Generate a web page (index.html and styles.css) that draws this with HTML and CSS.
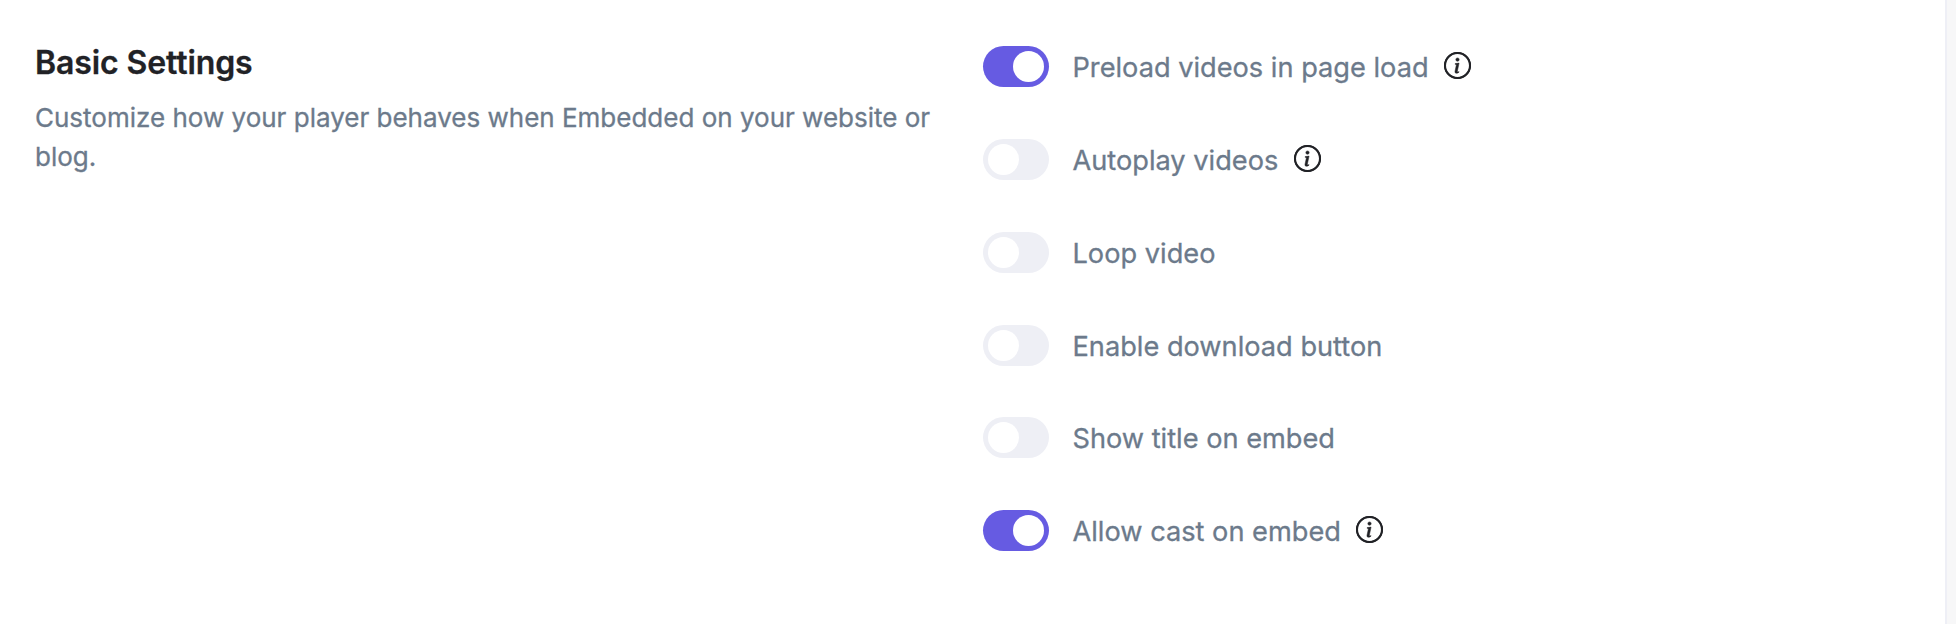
FILE: index.html
```html
<!DOCTYPE html>
<html lang="en">
<head>
<meta charset="utf-8">
<title>Basic Settings</title>
<link rel="stylesheet" href="styles.css">
</head>
<body>
<svg class="sprite" aria-hidden="true">
  <symbol id="info" viewBox="0 0 16 16">
    <path d="M8 15A7 7 0 1 1 8 1a7 7 0 0 1 0 14m0 1A8 8 0 1 0 8 0a8 8 0 0 0 0 16"/>
    <circle cx="8" cy="8" r="7.4" fill="none" stroke="#212226" stroke-width="1.2"/>
    <path stroke="#212226" stroke-width=".3" d="m8.93 6.588-2.29.287-.082.38.45.083c.294.07.352.176.288.469l-.738 3.468c-.194.897.105 1.319.808 1.319.545 0 1.178-.252 1.465-.598l.088-.416c-.2.176-.492.246-.686.246-.275 0-.375-.193-.304-.533zM9 4.5a1 1 0 1 1-2 0 1 1 0 0 1 2 0"/>
  </symbol>
</svg>
<main class="panel">
  <section class="intro">
    <h2 class="title">Basic Settings</h2>
    <p class="description">Customize how your player behaves when Embedded on your website or blog.</p>
  </section>
  <section class="options">
    <div class="option"><span class="toggle on"></span><span class="label">Preload videos in page load</span><svg class="info"><use href="#info"/></svg></div>
    <div class="option"><span class="toggle"></span><span class="label">Autoplay videos</span><svg class="info"><use href="#info"/></svg></div>
    <div class="option"><span class="toggle"></span><span class="label">Loop video</span></div>
    <div class="option"><span class="toggle"></span><span class="label">Enable download button</span></div>
    <div class="option"><span class="toggle"></span><span class="label">Show title on embed</span></div>
    <div class="option"><span class="toggle on"></span><span class="label">Allow cast on embed</span><svg class="info"><use href="#info"/></svg></div>
  </section>
</main>
</body>
</html>
```
FILE: styles.css
```css
* { box-sizing: border-box; }
body {
  margin: 0;
  height: 624px;
  overflow: hidden;
  background: #f7f7f8;
  font-family: Inter, "Liberation Sans", sans-serif;
}
.sprite { display: none; }
.panel {
  display: grid;
  grid-template-columns: 948px 1fr;
  width: 1947px;
  height: 624px;
  padding-left: 35px;
  background: #fff;
  border-right: 2px solid #eeeff6;
}
.intro { padding-top: 43px; }
.title {
  margin: 0;
  font-size: 32px;
  line-height: 40px;
  font-weight: 600;
  letter-spacing: -0.1px;
  color: #212226;
  -webkit-text-stroke: 0.3px #212226;
}
.description {
  margin: 15px 0 0;
  width: 910px;
  font-size: 26px;
  line-height: 39px;
  color: #6c7a8b;
  -webkit-text-stroke: 0.3px #6c7a8b;
}
.options {
  display: flex;
  flex-direction: column;
  gap: 51.8px;
  padding-top: 46.2px;
}
.option {
  display: flex;
  align-items: center;
  height: 41px;
}
.toggle {
  display: flex;
  width: 66px;
  height: 41px;
  padding: 5px;
  border-radius: 21px;
  background: #eeeff5;
}
.toggle::before {
  content: "";
  width: 31px;
  height: 31px;
  border-radius: 50%;
  background: #fff;
}
.toggle.on {
  justify-content: flex-end;
  background: #665be2;
}
.label {
  margin-left: 23.5px;
  padding-top: 2px;
  font-size: 27.2px;
  line-height: 39px;
  color: #6c7a8b;
  -webkit-text-stroke: 0.3px #6c7a8b;
}
.info {
  width: 27px;
  height: 27px;
  margin: 0 0 2px 15.5px;
  fill: #212226;
}
```
